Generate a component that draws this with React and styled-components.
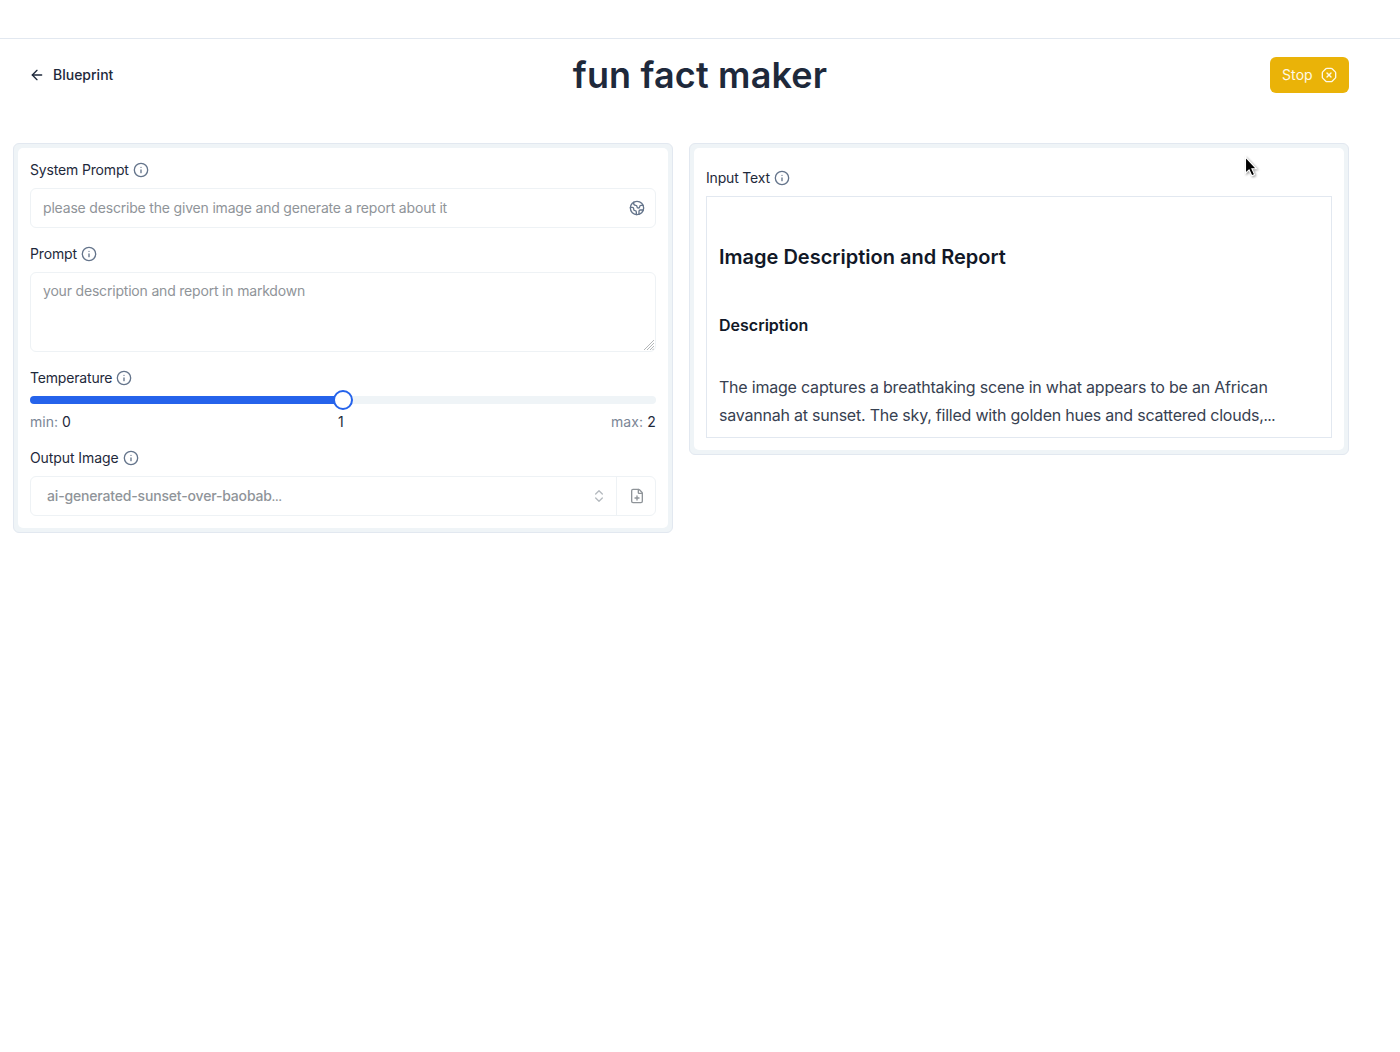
import React from "react";
import styled, { createGlobalStyle } from "styled-components";
import { ArrowLeft, ChevronsUpDown, Earth, FilePlus, Info, OctagonX } from "lucide-react";

const GlobalStyle = createGlobalStyle`
  *, *::before, *::after { box-sizing: border-box; }
  body {
    margin: 0;
    background: #fff;
    color: #1e293b;
    font-family: Inter, "Liberation Sans", sans-serif;
    font-size: 14px;
    line-height: 20px;
  }
  h1, h2, h3, p { margin: 0; }
  button, input, textarea { font: inherit; color: inherit; letter-spacing: inherit; }
`;

const Page = styled.div`
  position: relative;
  min-height: 1052px;
  overflow: hidden;
`;
const TopBar = styled.div`
  height: 39px;
  border-bottom: 1px solid #e2e8f0;
`;
const Header = styled.header`
  display: grid;
  grid-template-columns: 1fr auto 1fr;
  align-items: center;
  height: 72px;
  padding: 0 51px 0 29px;
`;
const BackLink = styled.button`
  display: flex;
  align-items: center;
  gap: 8px;
  padding: 0;
  border: 0;
  background: none;
  font-weight: 500;
`;
const Title = styled.h1`
  padding-left: 22px;
  color: #1e293b;
  font-size: 36px;
  line-height: 40px;
  font-weight: 600;
  letter-spacing: 0.16px;
  white-space: nowrap;
`;
const StopButton = styled.button`
  justify-self: end;
  display: flex;
  align-items: center;
  justify-content: space-between;
  width: 79px;
  height: 36px;
  padding: 0 12px;
  border: 0;
  border-radius: 6px;
  background: #eab308;
  color: #fef9e7;
  letter-spacing: 0.1px;
`;
const Columns = styled.main`
  display: grid;
  grid-template-columns: 660px 660px;
  align-items: start;
  gap: 16px;
  padding: 32px 0 0 13px;
`;
const Panel = styled.section`
  padding: 4px;
  border: 1px solid #e2e8f0;
  border-radius: 6px;
  background: #eff4f7;
`;
const PanelBody = styled.div`
  display: flex;
  flex-direction: column;
  gap: 16px;
  padding: ${(p) => p.$top} 12px 12px;
  border-radius: 5px;
  background: #fff;
`;
const Field = styled.div`
  display: flex;
  flex-direction: column;
  gap: 8px;
`;
const Label = styled.label`
  display: flex;
  align-items: center;
  gap: 4px;
  height: 20px;
  letter-spacing: ${(p) => p.$track};
  svg { color: #64748b; }
`;
const InputBox = styled.div`
  display: flex;
  align-items: center;
  height: 40px;
  padding: 0 10px 0 12px;
  border: 1px solid #eef2f5;
  border-radius: 6px;
  color: #64748b;
`;
const TextInput = styled.input`
  flex: 1;
  min-width: 0;
  padding: 0;
  border: 0;
  outline: 0;
  background: none;
  color: #8f9499;
  letter-spacing: -0.185px;
`;
const AreaWrap = styled.div`
  position: relative;
`;
const TextArea = styled.textarea`
  display: block;
  width: 100%;
  height: 80px;
  padding: 8px 12px;
  border: 1px solid #eef2f5;
  border-radius: 6px;
  outline: 0;
  resize: none;
  background: #fff;
  color: #8f9499;
  letter-spacing: -0.19px;
`;
const Grip = styled.svg`
  position: absolute;
  right: 2px;
  bottom: 2px;
`;
const Slider = styled.div`
  display: flex;
  align-items: center;
  height: 20px;
  margin-top: -6px;
`;
const Track = styled.div`
  flex: 1;
  height: 8px;
  background: ${(p) => (p.$filled ? "#2563eb" : "#eff4f7")};
  border-radius: ${(p) => (p.$filled ? "4px 0 0 4px" : "0 4px 4px 0")};
`;
const Thumb = styled.div`
  width: 20px;
  height: 20px;
  margin: 0 -1px;
  border: 2px solid #2563eb;
  border-radius: 50%;
  background: #fff;
  z-index: 1;
`;
const Scale = styled.div`
  display: flex;
  justify-content: space-between;
  margin-top: -6px;
`;
const Bound = styled.span`
  letter-spacing: ${(p) => p.$track};
`;
const Muted = styled.span`
  color: #7b8696;
`;
const SelectGroup = styled.div`
  display: flex;
  height: 40px;
  border: 1px solid #eef2f5;
  border-radius: 6px;
  color: #8f9499;
`;
const SelectTrigger = styled.div`
  flex: 1;
  display: flex;
  align-items: center;
  justify-content: space-between;
  padding: 0 9px 0 16px;
  font-weight: 500;
  letter-spacing: -0.17px;
  svg { color: #b5babf; }
`;
const FileButton = styled.div`
  display: grid;
  place-items: center;
  width: 39px;
  padding-left: 2px;
  border-left: 1px solid #eef2f5;
`;
const Report = styled.article`
  height: 242px;
  padding: 46px 12px 0;
  border: 1px solid #e2e8f0;
  color: #111827;
`;
const ReportTitle = styled.h2`
  font-size: 20px;
  line-height: 28px;
  font-weight: 600;
`;
const ReportHeading = styled.h3`
  margin-top: 42px;
  font-size: 16px;
  line-height: 24px;
  font-weight: 600;
`;
const ReportText = styled.p`
  margin-top: 36px;
  font-size: 16px;
  line-height: 28px;
  color: #374151;
  white-space: nowrap;
`;
const Line = styled.span`
  display: block;
  letter-spacing: ${(p) => p.$track};
`;
const Ellipsis = styled.span`
  font-size: 0.72em;
  font-weight: 700;
  line-height: 1;
`;
const Pointer = styled.svg`
  position: absolute;
  left: 1244px;
  top: 156px;
  filter: drop-shadow(1px 1px 1px rgba(0, 0, 0, 0.4));
`;

const FieldLabel = ({ children, track = "-0.16px" }) => (
  <Label $track={track}>
    {children}
    <Info size={16} />
  </Label>
);

export default function App() {
  return (
    <Page>
      <GlobalStyle />
      <TopBar />
      <Header>
        <BackLink>
          <ArrowLeft size={16} />
          Blueprint
        </BackLink>
        <Title>fun fact maker</Title>
        <StopButton>
          Stop
          <OctagonX size={16} />
        </StopButton>
      </Header>
      <Columns>
        <Panel>
          <PanelBody $top="12px">
            <Field>
              <FieldLabel>System Prompt</FieldLabel>
              <InputBox>
                <TextInput readOnly value="please describe the given image and generate a report about it" />
                <Earth size={16} />
              </InputBox>
            </Field>
            <Field>
              <FieldLabel>Prompt</FieldLabel>
              <AreaWrap>
                <TextArea readOnly value="your description and report in markdown" />
                <Grip width="10" height="10" viewBox="0 0 10 10" fill="none" stroke="#b4b7b9" strokeWidth="1">
                  <path d="M0 10 10 0M3 10l7-7M6 10l4-4M8.5 10 10 8.5" />
                </Grip>
              </AreaWrap>
            </Field>
            <Field>
              <FieldLabel track="-0.18px">Temperature</FieldLabel>
              <Slider>
                <Track $filled />
                <Thumb />
                <Track />
              </Slider>
              <Scale>
                <Bound><Muted>min:</Muted> 0</Bound>
                <Bound>1</Bound>
                <Bound $track="0.12px"><Muted>max:</Muted> 2</Bound>
              </Scale>
            </Field>
            <Field>
              <FieldLabel track="-0.09px">Output Image</FieldLabel>
              <SelectGroup>
                <SelectTrigger>
                  <span>ai-generated-sunset-over-baobab<Ellipsis>…</Ellipsis></span>
                  <ChevronsUpDown size={16} />
                </SelectTrigger>
                <FileButton><FilePlus size={16} /></FileButton>
              </SelectGroup>
            </Field>
          </PanelBody>
        </Panel>
        <Panel>
          <PanelBody $top="20px">
            <Field>
              <FieldLabel track="-0.18px">Input Text</FieldLabel>
              <Report>
                <ReportTitle>Image Description and Report</ReportTitle>
                <ReportHeading>Description</ReportHeading>
                <ReportText>
                  <Line $track="-0.21px">The image captures a breathtaking scene in what appears to be an African</Line>
                  <Line $track="-0.225px">savannah at sunset. The sky, filled with golden hues and scattered clouds,<Ellipsis>…</Ellipsis></Line>
                </ReportText>
              </Report>
            </Field>
          </PanelBody>
        </Panel>
      </Columns>
      <Pointer width="16" height="24" viewBox="0 0 16 24">
        <path d="M1.5 1v16.2l3.6-3.3 2.7 5.9 2.8-1.2-2.7-5.8h4.6z" fill="#000" stroke="#fff" strokeWidth="1.1" />
      </Pointer>
    </Page>
  );
}
